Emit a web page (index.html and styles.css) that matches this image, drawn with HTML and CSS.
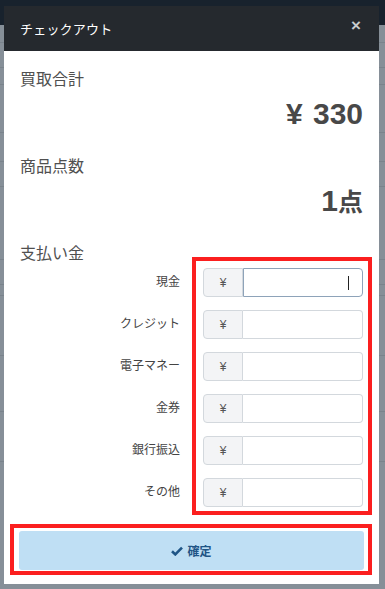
FILE: index.html
```html
<!DOCTYPE html>
<html>
	<head>
		<meta charset="UTF-8">
		<title>チェックアウト</title>
		<link rel="stylesheet" href="styles.css">
	</head>
	<body>
		<div class="page">
			<div class="topbar"></div>
			<ul class="rows">
				<li style="height:18px"></li>
				<li style="height:25px"></li>
				<li style="height:17px"></li>
				<li style="height:48px"></li>
				<li style="height:29px"></li>
				<li style="height:25px"></li>
				<li style="height:73px"></li>
				<li style="height:25px"></li>
				<li style="height:11px"></li>
				<li style="height:60px"></li>
				<li style="height:56px"></li>
				<li style="height:50px"></li>
			</ul>
		</div>

		<div class="modal">
			<div class="modal-head">
				<span class="modal-title">チェックアウト</span>
				<span class="modal-close">&times;</span>
			</div>
			<div class="modal-body">
				<div class="sum-label">買取合計</div>
				<div class="sum-value"><span class="cur">¥</span> 330</div>
				<div class="sum-label">商品点数</div>
				<div class="sum-value">1<span class="unit">点</span></div>
				<div class="sum-label">支払い金</div>

				<div class="pay">
					<ul class="pay-names">
						<li>現金</li>
						<li>クレジット</li>
						<li>電子マネー</li>
						<li>金券</li>
						<li>銀行振込</li>
						<li>その他</li>
					</ul>
					<div class="pay-inputs mark">
						<div class="group focus"><span class="yen">¥</span><span class="field"><span class="caret"></span></span></div>
						<div class="group"><span class="yen">¥</span><span class="field"></span></div>
						<div class="group"><span class="yen">¥</span><span class="field"></span></div>
						<div class="group"><span class="yen">¥</span><span class="field"></span></div>
						<div class="group"><span class="yen">¥</span><span class="field"></span></div>
						<div class="group"><span class="yen">¥</span><span class="field"></span></div>
					</div>
				</div>

				<div class="submit-wrap mark">
					<button class="submit">
						<svg width="12" height="10" viewBox="0 0 12 10"><path d="M1 5.2 L4.3 8.4 L11 1.6" fill="none" stroke="#1f5586" stroke-width="2.6"/></svg>
						確定
					</button>
				</div>
			</div>
		</div>
	</body>
</html>
```
FILE: styles.css
```css
*{margin:0;padding:0;box-sizing:border-box;font-family:"Liberation Sans","Noto Sans CJK JP",sans-serif;}
ul{list-style:none;}
html,body{height:100%;}
body{background:#868f98;overflow:hidden;}

.page{height:100%;}
.topbar{height:25px;background:#18222d;}
.rows li{border-bottom:1px solid #7a838c;}

/* modal */
.modal{
	position:absolute;
	left:4px;
	top:6px;
	width:375px;
	height:578px;
	background:#fff;
}
.modal-head{
	height:45px;
	background:#25292e;
	display:flex;
	align-items:center;
	justify-content:space-between;
	padding:0 16px;
	color:#fff;
}
.modal-title{font-size:13px;letter-spacing:0.2px;}
.modal-close{font-size:17px;font-weight:bold;color:#c9cccf;margin-top:-5px;padding-right:2px;}

.modal-body{padding:17px 16px 0;}
.sum-label{font-size:16px;line-height:24px;color:#505050;}
.sum-value{
	height:32px;
	font-size:30px;
	line-height:32px;
	font-weight:bold;
	color:#484848;
	text-align:right;
	margin:6px 0 25px;
}
.sum-value .cur{margin-right:2px;}
.sum-value .unit{font-size:25px;}

/* payments */
.pay{display:flex;gap:12px;margin:-9px -9px 0 0;}
.pay-names{flex:1;padding-top:11px;display:flex;flex-direction:column;gap:13px;}
.pay-names li{height:29px;line-height:29px;font-size:12px;color:#444;text-align:right;}
.mark{border:4px solid #fb1f1f;}
.pay-inputs{width:180px;padding:7px 5px 4px 7px;display:flex;flex-direction:column;gap:13px;}
.group{display:flex;height:29px;}
.yen{
	width:40px;
	background:#f3f4f6;
	border:1px solid #d3d8dd;
	border-radius:4px 0 0 4px;
	display:flex;
	align-items:center;
	justify-content:center;
	font-size:12px;
	color:#555;
}
.field{
	flex:1;
	border:1px solid #d3d8dd;
	border-left:0;
	border-radius:0 4px 4px 0;
	position:relative;
}
.focus .field{border:1px solid #8ea3b9;}
.caret{position:absolute;right:13px;top:7px;width:1px;height:14px;background:#222;}

/* submit */
.submit-wrap{margin:9px -9px 0 -10px;padding:3px 4px 1px 5px;}
.submit{
	width:100%;
	height:39px;
	border:0;
	border-radius:3px;
	background:#bfdff4;
	color:#1f5586;
	font-size:12px;
	font-weight:bold;
	display:flex;
	align-items:center;
	justify-content:center;
	gap:4px;
}
```
